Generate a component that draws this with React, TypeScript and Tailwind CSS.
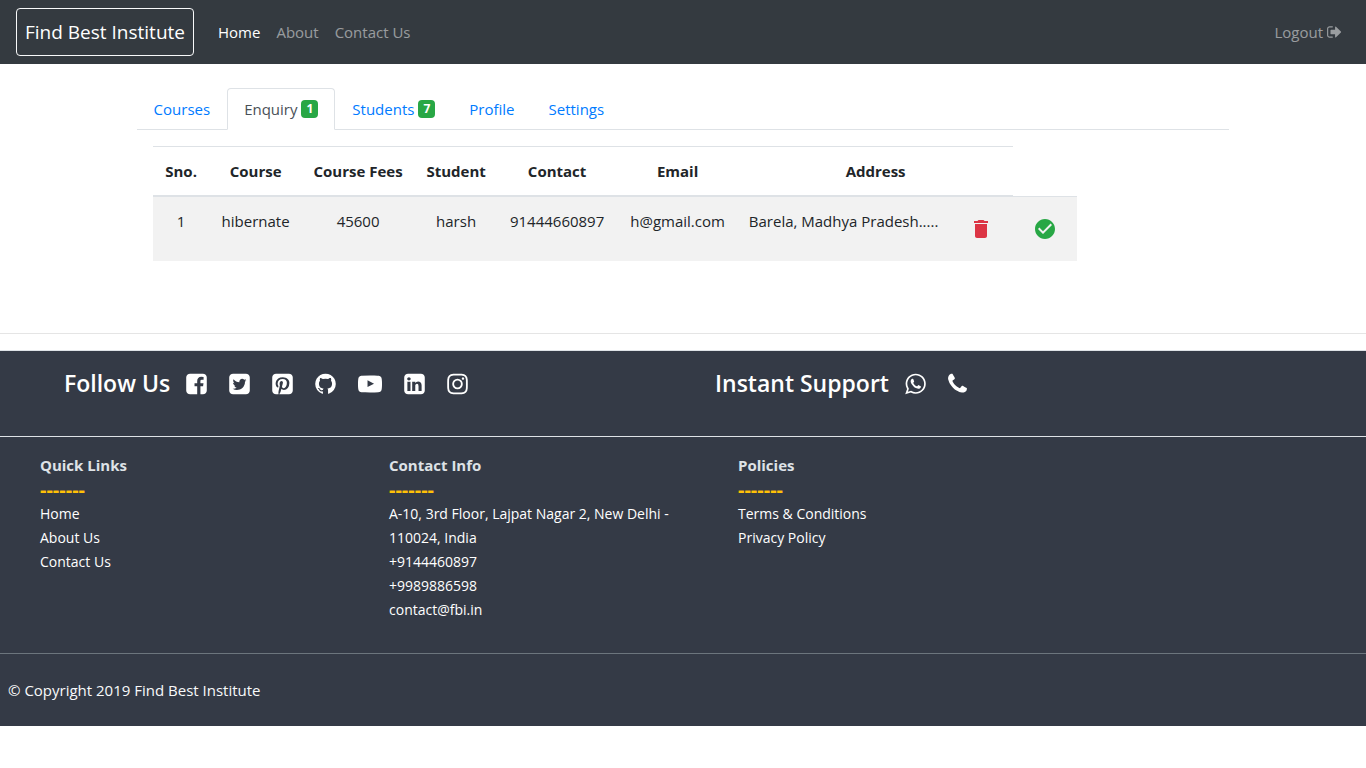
import React from 'react';
import { MdCheckCircle, MdDelete } from 'react-icons/md';

const icons = {
  facebook:
    'M1376 128q119 0 203.5 84.5t84.5 203.5v960q0 119-84.5 203.5t-203.5 84.5h-188v-595h199l30-232h-229v-148q0-56 23.5-84t91.5-28l122-1v-207q-63-9-178-9-136 0-217.5 80t-81.5 226v171h-200v232h200v595h-532q-119 0-203.5-84.5t-84.5-203.5v-960q0-119 84.5-203.5t203.5-84.5h960z',
  twitter:
    'M1408 610q-56 25-121 34 68-40 93-117-65 38-134 51-61-66-153-66-87 0-148.5 61.5t-61.5 148.5q0 29 5 48-129-7-242-65t-192-155q-29 50-29 106 0 114 91 175-47-1-100-26v2q0 75 50 133.5t123 72.5q-29 8-51 8-13 0-39-4 21 63 74.5 104t121.5 42q-116 90-261 90-26 0-50-3 148 94 322 94 112 0 210-35.5t168-95 120.5-137 75-162 24.5-168.5q0-18-1-27 63-45 105-109zm256-194v960q0 119-84.5 203.5t-203.5 84.5h-960q-119 0-203.5-84.5t-84.5-203.5v-960q0-119 84.5-203.5t203.5-84.5h960q119 0 203.5 84.5t84.5 203.5z',
  pinterest:
    'M1376 128q119 0 203.5 84.5t84.5 203.5v960q0 119-84.5 203.5t-203.5 84.5h-725q85-122 108-210 9-34 53-209 21 39 73.5 67t112.5 28q181 0 295.5-147.5t114.5-373.5q0-84-35-162.5t-96.5-139-152.5-97-197-36.5q-104 0-194.5 28.5t-153 76.5-107.5 109.5-66.5 128-21.5 132.5q0 102 39.5 180t116.5 110q13 5 23.5 0t14.5-19q10-44 15-61 6-23-11-42-50-62-50-150 0-150 103.5-256.5t270.5-106.5q149 0 232.5 81t83.5 210q0 168-67.5 286t-173.5 118q-60 0-97-43.5t-23-103.5q8-34 26.5-92.5t29.5-102 11-74.5q0-49-26.5-81.5t-75.5-32.5q-61 0-103.5 56.5t-42.5 139.5q0 72 24 121l-98 414q-24 100-7 254h-183q-119 0-203.5-84.5t-84.5-203.5v-960q0-119 84.5-203.5t203.5-84.5h960z',
  github:
    'M896 128q209 0 385.5 103t279.5 279.5 103 385.5q0 251-146.5 451.5t-378.5 277.5q-27 5-40-7t-13-30q0-3 .5-76.5t.5-134.5q0-97-52-142 57-6 102.5-18t94-39 81-66.5 53-105 20.5-150.5q0-119-79-206 37-91-8-204-28-9-81 11t-92 44l-38 24q-93-26-192-26t-192 26q-16-11-42.5-27t-83.5-38.5-85-13.5q-45 113-8 204-79 87-79 206 0 85 20.5 150t52.5 105 80.5 67 94 39 102.5 18q-39 36-49 103-21 10-45 15t-57 5-65.5-21.5-55.5-62.5q-19-32-48.5-52t-49.5-24l-20-3q-21 0-29 4.5t-5 11.5 9 14 13 12l7 5q22 10 43.5 38t31.5 51l10 23q13 38 44 61.5t67 30 69.5 7 55.5-3.5l23-4q0 38 .5 88.5t.5 54.5q0 18-13 30t-40 7q-232-77-378.5-277.5t-146.5-451.5q0-209 103-385.5t279.5-279.5 385.5-103z',
  youtube:
    'M711 1128l484-250-484-253v503zm185-862q168 0 324.5 4.5t229.5 9.5l73 4q1 0 17 1.5t23 3 23.5 4.5 28.5 8 28 13 31 19.5 29 26.5q6 6 15.5 18.5t29 58.5 26.5 101q8 64 12.5 136.5t5.5 113.5v176q1 145-18 290-7 55-25 99.5t-32 61.5l-14 17q-14 15-29 26.5t-31 19-28 12.5-28.5 8-24 4.5-23 3-16.5 1.5q-251 19-627 19-207-2-359.5-6.5t-200.5-7.5l-49-4-36-4q-36-5-54.5-10t-51-21-56.5-41q-6-6-15.5-18.5t-29-58.5-26.5-101q-8-64-12.5-136.5t-5.5-113.5v-176q-1-145 18-290 7-55 25-99.5t32-61.5l14-17q14-15 29-26.5t31-19.5 28-13 28.5-8 23.5-4.5 23-3 17-1.5q251-18 627-18z',
  linkedin:
    'M365 1414h231v-694h-231v694zm246-908q-1-52-36-86t-93-34-94.5 34-36.5 86q0 51 35.5 85.5t92.5 34.5h1q59 0 95-34.5t36-85.5zm585 908h231v-398q0-154-73-233t-193-79q-136 0-209 117h2v-101h-231q3 66 0 694h231v-388q0-38 7-56 15-35 45-59.5t74-24.5q116 0 116 157v371zm468-998v960q0 119-84.5 203.5t-203.5 84.5h-960q-119 0-203.5-84.5t-84.5-203.5v-960q0-119 84.5-203.5t203.5-84.5h960q119 0 203.5 84.5t84.5 203.5z',
  instagram:
    'M1152 896q0-106-75-181t-181-75-181 75-75 181 75 181 181 75 181-75 75-181zm138 0q0 164-115 279t-279 115-279-115-115-279 115-279 279-115 279 115 115 279zm108-410q0 38-27 65t-65 27-65-27-27-65 27-65 65-27 65 27 27 65zm-502-220q-7 0-76.5-.5t-105.5 0-96.5 3-103 10-71.5 18.5q-50 20-88 58t-58 88q-11 29-18.5 71.5t-10 103-3 96.5 0 105.5.5 76.5-.5 76.5 0 105.5 3 96.5 10 103 18.5 71.5q20 50 58 88t88 58q29 11 71.5 18.5t103 10 96.5 3 105.5 0 76.5-.5 76.5.5 105.5 0 96.5-3 103-10 71.5-18.5q50-20 88-58t58-88q11-29 18.5-71.5t10-103 3-96.5 0-105.5-.5-76.5.5-76.5 0-105.5-3-96.5-10-103-18.5-71.5q-20-50-58-88t-88-58q-29-11-71.5-18.5t-103-10-96.5-3-105.5 0-76.5.5zm768 630q0 229-5 317-10 208-124 322t-322 124q-88 5-317 5t-317-5q-208-10-322-124t-124-322q-5-88-5-317t5-317q10-208 124-322t322-124q88-5 317-5t317 5q208 10 322 124t124 322q5 88 5 317z',
  whatsapp:
    'M1113 974q13 0 97.5 44t89.5 53q2 5 2 15 0 33-17 76-16 39-71 65.5t-102 26.5q-57 0-190-62-98-45-170-118t-148-185q-72-107-71-194v-8q3-91 74-158 24-22 52-22 6 0 18 1.5t19 1.5q19 0 26.5 6.5t15.5 27.5q8 20 33 88t25 75q0 21-34.5 57.5t-34.5 46.5q0 7 5 15 34 73 102 137 56 53 151 101 12 7 22 7 15 0 54-48.5t52-48.5zm-203 530q127 0 243.5-50t200.5-134 134-200.5 50-243.5-50-243.5-134-200.5-200.5-134-243.5-50-243.5 50-200.5 134-134 200.5-50 243.5q0 203 120 368l-79 233 242-77q158 104 345 104zm0-1382q153 0 292.5 60t240.5 161 161 240.5 60 292.5-60 292.5-161 240.5-240.5 161-292.5 60q-195 0-365-94l-417 134 136-405q-108-178-108-389 0-153 60-292.5t161-240.5 240.5-161 292.5-60z',
  phone:
    'M1600 1240q0 27-10 70.5t-21 68.5q-21 50-122 106-94 51-186 51-27 0-53-3.5t-57.5-12.5-47-14.5-55.5-20.5-49-18q-98-35-175-83-127-79-264-216t-216-264q-48-77-83-175-3-9-18-49t-20.5-55.5-14.5-47-12.5-57.5-3.5-53q0-92 51-186 56-101 106-122 25-11 68.5-21t70.5-10q14 0 21 3 18 6 53 76 11 19 30 54t35 63.5 31 53.5q3 4 17.5 25t21.5 35.5 7 28.5q0 20-28.5 50t-62 55-62 53-28.5 46q0 9 5 22.5t8.5 20.5 14 24 11.5 19q76 137 174 235t235 174q2 1 19 11.5t24 14 20.5 8.5 22.5 5q18 0 46-28.5t53-62 55-62 50-28.5q14 0 28.5 7t35.5 21.5 25 17.5q25 15 53.5 31t63.5 35 54 30q70 35 76 53 3 7 3 21z',
  signOut:
    'M704 1440q0 4 1 20t.5 26.5-3 23.5-10 19.5-20.5 6.5h-320q-119 0-203.5-84.5t-84.5-203.5v-704q0-119 84.5-203.5t203.5-84.5h320q13 0 22.5 9.5t9.5 22.5q0 4 1 20t.5 26.5-3 23.5-10 19.5-20.5 6.5h-320q-66 0-113 47t-47 113v704q0 66 47 113t113 47h312l11.5 1 11.5 3 8 5.5 7 9 2 13.5zm928-544q0 26-19 45l-544 544q-19 19-45 19t-45-19-19-45v-288h-448q-26 0-45-19t-19-45v-384q0-26 19-45t45-19h448v-288q0-26 19-45t45-19 45 19l544 544q19 19 19 45z',
};

type IconName = keyof typeof icons;

function Icon({ name, viewBox, className }: { name: IconName; viewBox: string; className: string }) {
  return (
    <svg aria-hidden="true" viewBox={viewBox} fill="currentColor" className={className}>
      <path d={icons[name]} />
    </svg>
  );
}

const SQUARE = '112 0 1568 1792';

const social: { name: IconName; label: string }[] = [
  { name: 'facebook', label: 'Facebook' },
  { name: 'twitter', label: 'Twitter' },
  { name: 'pinterest', label: 'Pinterest' },
  { name: 'github', label: 'GitHub' },
  { name: 'youtube', label: 'YouTube' },
  { name: 'linkedin', label: 'LinkedIn' },
  { name: 'instagram', label: 'Instagram' },
];

const tabs: { label: string; count?: number; active?: boolean }[] = [
  { label: 'Courses' },
  { label: 'Enquiry', count: 1, active: true },
  { label: 'Students', count: 7 },
  { label: 'Profile' },
  { label: 'Settings' },
];

const columns = [
  { title: 'Sno.', width: 'w-[57px]', span: 1 },
  { title: 'Course', width: 'w-[92px]', span: 1 },
  { title: 'Course Fees', width: 'w-[113px]', span: 1 },
  { title: 'Student', width: 'w-[83px]', span: 1 },
  { title: 'Contact', width: 'w-[119px]', span: 1 },
  { title: 'Email', width: 'w-[122px]', span: 1 },
  { title: 'Address', width: 'w-[274px]', span: 2 },
];

const enquiries = [
  ['1', 'hibernate', '45600', 'harsh', '91444660897', 'h@gmail.com', 'Barela, Madhya Pradesh.....'],
];

function Navbar() {
  return (
    <nav className="flex items-center bg-[#343a40] px-4 py-2">
      <a
        href="#home"
        className="mr-4 rounded border border-[#f8f9fa] px-2 py-2 text-[19px] leading-[30px] text-white"
      >
        Find Best Institute
      </a>
      <div className="flex text-white/50">
        <a href="#home" className="px-2 py-2 text-white">Home</a>
        <a href="#about" className="px-2 py-2">About</a>
        <a href="#contact" className="px-2 py-2">Contact Us</a>
      </div>
      <a href="#logout" className="ml-auto flex items-center gap-1 px-2 py-2 text-white/50">
        Logout
        <Icon name="signOut" viewBox="64 0 1664 1792" className="h-4 w-[15px]" />
      </a>
    </nav>
  );
}

function Tabs() {
  return (
    <div role="tablist" className="flex border-b border-[#dee2e6]">
      {tabs.map((tab) => (
        <button
          key={tab.label}
          type="button"
          role="tab"
          aria-selected={!!tab.active}
          className={
            tab.active
              ? '-mb-px flex items-center gap-1 rounded-t border border-[#dee2e6] border-b-white bg-white px-4 py-2 text-[#495057]'
              : '-mb-px flex items-center gap-1 border border-transparent px-4 py-2 text-[#007bff]'
          }
        >
          {tab.label}
          {tab.count !== undefined && (
            <span className="rounded bg-[#28a745] px-[5px] text-xs leading-[18px] font-bold text-white">
              {tab.count}
            </span>
          )}
        </button>
      ))}
    </div>
  );
}

function EnquiryTable() {
  return (
    <table className="border-collapse text-center text-[#212529]">
      <thead>
        <tr>
          {columns.map((column) => (
            <th
              key={column.title}
              colSpan={column.span}
              className={`${column.width} border-t border-b-2 border-[#dee2e6] py-3 font-bold whitespace-nowrap`}
            >
              {column.title}
            </th>
          ))}
        </tr>
      </thead>
      <tbody>
        {enquiries.map((row) => (
          <tr key={row[0]} className="bg-[#f2f2f2]">
            {row.map((cell, i) => (
              <td key={i} className="border-t border-[#dee2e6] py-3 align-top whitespace-nowrap">
                {cell}
              </td>
            ))}
            <td className="w-16 border-t border-[#dee2e6] p-3">
              <button type="button" aria-label="Delete" className="flex size-10 items-center justify-center text-[#dc3545]">
                <MdDelete className="size-6" />
              </button>
            </td>
            <td className="w-16 border-t border-[#dee2e6] p-3">
              <button type="button" aria-label="Approve" className="flex size-10 items-center justify-center text-[#28a745]">
                <MdCheckCircle className="size-6" />
              </button>
            </td>
          </tr>
        ))}
      </tbody>
    </table>
  );
}

function FooterColumn({ title, children }: { title: string; children: React.ReactNode }) {
  return (
    <section>
      <h3 className="font-bold text-[#dee2e6]">{title}</h3>
      <div className="text-xl leading-[25px] font-bold text-[#ffc107]">-------</div>
      <ul className="-mr-4 text-sm leading-6 text-white">{children}</ul>
    </section>
  );
}

function Footer() {
  return (
    <footer className="border-t border-[#dee2e6] bg-[#343a46] text-white">
      <div className="grid grid-cols-2 border-b border-[#dee2e6] px-8 pt-4 pb-9">
        <div className="flex items-center px-8">
          <h2 className="mr-4 text-[23px] leading-[33px] font-semibold">Follow Us</h2>
          <div className="flex gap-[22px]">
            {social.map(({ name, label }) => (
              <a key={name} href={`#${name}`} aria-label={label}>
                {name === 'youtube' ? (
                  <Icon name={name} viewBox="0 0 1792 1792" className="size-6" />
                ) : (
                  <Icon name={name} viewBox={SQUARE} className="h-6 w-[21px]" />
                )}
              </a>
            ))}
          </div>
        </div>
        <div className="flex items-center px-8">
          <h2 className="mr-4 text-[23px] leading-[33px] font-semibold">Instant Support</h2>
          <div className="flex gap-[22px]">
            <a href="#whatsapp" aria-label="WhatsApp">
              <Icon name="whatsapp" viewBox={SQUARE} className="h-6 w-[21px]" />
            </a>
            <a href="#phone" aria-label="Phone">
              <Icon name="phone" viewBox="192 0 1408 1792" className="h-6 w-[19px]" />
            </a>
          </div>
        </div>
      </div>
      <div className="grid grid-cols-4 gap-[70px] border-b border-[#6c757d] pt-4 pb-[31px] pl-10">
        <FooterColumn title="Quick Links">
          <li><a href="#home">Home</a></li>
          <li><a href="#about">About Us</a></li>
          <li><a href="#contact">Contact Us</a></li>
        </FooterColumn>
        <FooterColumn title="Contact Info">
          <li>A-10, 3rd Floor, Lajpat Nagar 2, New Delhi - 110024, India</li>
          <li>+9144460897</li>
          <li>+9989886598</li>
          <li>contact@fbi.in</li>
        </FooterColumn>
        <FooterColumn title="Policies">
          <li><a href="#terms">Terms &amp; Conditions</a></li>
          <li><a href="#privacy">Privacy Policy</a></li>
        </FooterColumn>
      </div>
      <p className="px-2 py-6 text-[#f8f9fa]">© Copyright 2019 Find Best Institute</p>
    </footer>
  );
}

export default function App() {
  return (
    <div className="bg-white font-['Open_Sans','Noto_Sans',sans-serif] text-[15px] leading-6">
      <Navbar />
      <main className="mx-auto mt-6 mb-[72px] w-4/5">
        <Tabs />
        <div className="p-4 pb-0">
          <EnquiryTable />
        </div>
      </main>
      <hr className="mb-4 border-black/10" />
      <Footer />
    </div>
  );
}
